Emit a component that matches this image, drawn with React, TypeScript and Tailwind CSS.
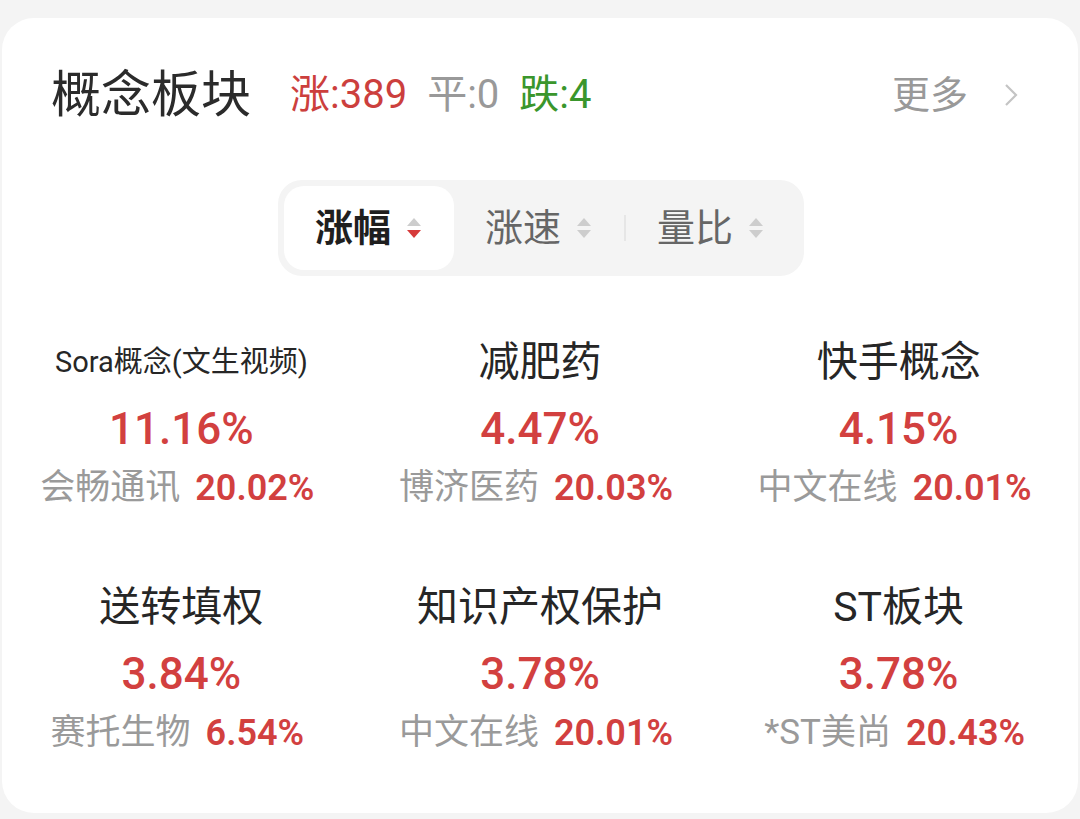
import { ReactNode } from "react";

const FONT = { fontFamily: "Roboto, 'Noto Sans CJK SC', sans-serif" };

interface Sector {
  name: string;
  small?: boolean;
  pct: string;
  stock: string;
  stockPct: string;
}

const sectors: Sector[] = [
  { name: "Sora概念(文生视频)", small: true, pct: "11.16%", stock: "会畅通讯", stockPct: "20.02%" },
  { name: "减肥药", pct: "4.47%", stock: "博济医药", stockPct: "20.03%" },
  { name: "快手概念", pct: "4.15%", stock: "中文在线", stockPct: "20.01%" },
  { name: "送转填权", pct: "3.84%", stock: "赛托生物", stockPct: "6.54%" },
  { name: "知识产权保护", pct: "3.78%", stock: "中文在线", stockPct: "20.01%" },
  { name: "ST板块", pct: "3.78%", stock: "*ST美尚", stockPct: "20.43%" },
];

function SortIcon({ active }: { active?: boolean }) {
  return (
    <svg width="18" height="26" viewBox="0 0 18 26" className="ml-[14px]">
      <path d="M9 3 L16 11 L2 11 Z" fill="#cdcdcd" />
      <path d="M9 23 L16 15 L2 15 Z" fill={active ? "#d63a3a" : "#cdcdcd"} />
    </svg>
  );
}

function Tab({ label, active, children }: { label: string; active?: boolean; children?: ReactNode }) {
  return (
    <div
      className={
        "w-[170px] h-[84px] flex items-center justify-center rounded-[20px] " +
        (active ? "bg-white" : "")
      }
    >
      <span
        className={
          "text-[38px] leading-none " + (active ? "font-bold text-[#1f1f1f]" : "text-[#666666]")
        }
      >
        {label}
      </span>
      <SortIcon active={active} />
      {children}
    </div>
  );
}

function SectorCell({ s }: { s: Sector }) {
  return (
    <div className="flex flex-col items-center">
      <div
        className={
          "h-[60px] flex items-center text-[#262626] " +
          (s.small ? "text-[29px]" : "text-[41px]")
        }
      >
        {s.name}
      </div>
      <div className="h-[72px] flex items-center text-[44px] font-medium text-[#d2403f]">
        {s.pct}
      </div>
      <div className="h-[46px] flex items-center gap-[15px] -ml-[8px]">
        <span className="text-[35px] text-[#9a9a9a]">{s.stock}</span>
        <span className="text-[36px] font-semibold text-[#d2403f]">{s.stockPct}</span>
      </div>
    </div>
  );
}

export default function App() {
  return (
    <div className="w-[1080px] h-[819px] bg-[#f4f4f4] pt-[18px] overflow-hidden" style={FONT}>
      <div className="mx-[2px] h-[795px] bg-white rounded-[32px] pt-[47px]">
        {/* Header */}
        <div className="h-[60px] flex items-center pl-[49px] pr-[58px]">
          <h2 className="text-[50px] font-normal text-[#2b2b2b] leading-none">概念板块</h2>
          <div className="flex items-center gap-[20px] ml-[39px] text-[40px] leading-none">
            <span className="text-[#cc3f3d]">涨:389</span>
            <span className="text-[#999999]">平:0</span>
            <span className="text-[#3a962c]">跌:4</span>
          </div>
          <div className="ml-auto flex items-center">
            <span className="text-[38px] text-[#999999] leading-none">更多</span>
            <svg width="18" height="26" viewBox="0 0 18 26" className="ml-[34px]">
              <path d="M4 3 L14 13 L4 23" fill="none" stroke="#c4c4c4" strokeWidth="2.2" />
            </svg>
          </div>
        </div>

        {/* Sort tabs */}
        <div className="mt-[55px] flex justify-center">
          <div className="flex items-center p-[6px] pr-[8px] bg-[#f4f4f4] rounded-[24px] ml-[2px]">
            <Tab label="涨幅" active />
            <Tab label="涨速" />
            <div className="w-[2px] h-[26px] bg-[#e6e6e6]" />
            <Tab label="量比" />
          </div>
        </div>

        {/* Sector grid */}
        <div className="mt-[57px] grid grid-cols-3 gap-y-[67px]">
          {sectors.map((s, i) => (
            <SectorCell key={i} s={s} />
          ))}
        </div>
      </div>
    </div>
  );
}
